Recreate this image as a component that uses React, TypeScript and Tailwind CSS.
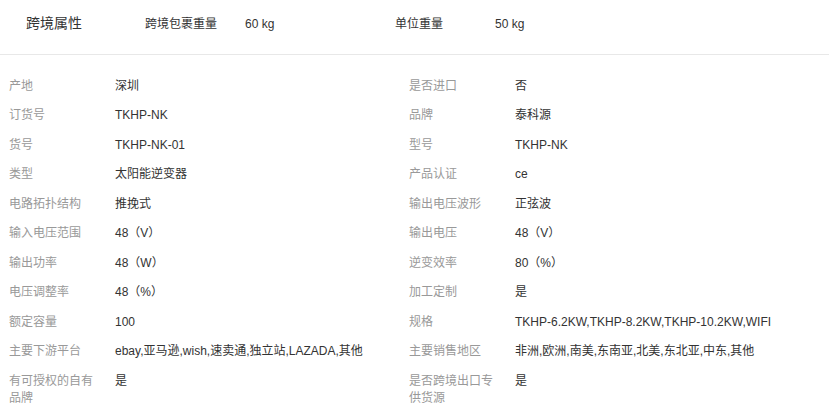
const font = { fontFamily: '"Liberation Sans", "Noto Sans CJK SC", sans-serif' };

const rows: [string, string, string, string][] = [
  ['产地', '深圳', '是否进口', '否'],
  ['订货号', 'TKHP-NK', '品牌', '泰科源'],
  ['货号', 'TKHP-NK-01', '型号', 'TKHP-NK'],
  ['类型', '太阳能逆变器', '产品认证', 'ce'],
  ['电路拓扑结构', '推挽式', '输出电压波形', '正弦波'],
  ['输入电压范围', '48（V）', '输出电压', '48（V）'],
  ['输出功率', '48（W）', '逆变效率', '80（%）'],
  ['电压调整率', '48（%）', '加工定制', '是'],
  ['额定容量', '100', '规格', 'TKHP-6.2KW,TKHP-8.2KW,TKHP-10.2KW,WIFI'],
  ['主要下游平台', 'ebay,亚马逊,wish,速卖通,独立站,LAZADA,其他', '主要销售地区', '非洲,欧洲,南美,东南亚,北美,东北亚,中东,其他'],
  ['有可授权的自有品牌', '是', '是否跨境出口专供货源', '是'],
];

function Cell({ label, value }: { label: string; value: string }) {
  return (
    <div className="flex py-[6px] leading-[17.5px]">
      <div className="w-[106px] shrink-0 pr-[14px] text-[#999]">{label}</div>
      <div className="text-[#333]">{value}</div>
    </div>
  );
}

export default function App() {
  return (
    <div className="w-[829px] h-[408px] bg-white overflow-hidden text-[12px]" style={font}>
      {/* header */}
      <div className="h-[55px] border-b border-[#e8e8e8] flex items-baseline pt-[14px] leading-[18px] text-[#333]">
        <div className="w-[145px] pl-[26px] text-[14px]">跨境属性</div>
        <div className="w-[100px]">跨境包裹重量</div>
        <div className="w-[150px]">60 kg</div>
        <div className="w-[100px]">单位重量</div>
        <div>50 kg</div>
      </div>

      {/* attributes */}
      <div className="grid grid-cols-[400px_400px] pl-[9px] pt-[16.5px]">
        {rows.map((r, i) => (
          <div key={i} className="contents">
            <Cell label={r[0]} value={r[1]} />
            <Cell label={r[2]} value={r[3]} />
          </div>
        ))}
      </div>
    </div>
  );
}
